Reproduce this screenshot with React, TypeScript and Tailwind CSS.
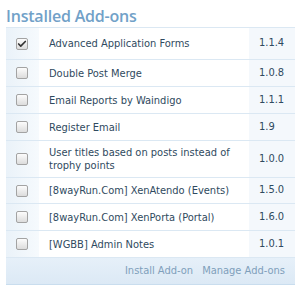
import { Check } from 'lucide-react';

const addons = [
  { title: 'Advanced Application Forms', version: '1.1.4', checked: true, h: 'h-[32px]' },
  { title: 'Double Post Merge', version: '1.0.8', h: 'h-[27px]' },
  { title: 'Email Reports by Waindigo', version: '1.1.1', h: 'h-[27px]' },
  { title: 'Register Email', version: '1.9', h: 'h-[27px]' },
  { title: 'User titles based on posts instead of trophy points', version: '1.0.0', h: 'h-[37px]' },
  { title: '[8wayRun.Com] XenAtendo (Events)', version: '1.5.0', h: 'h-[26px]' },
  { title: '[8wayRun.Com] XenPorta (Portal)', version: '1.6.0', h: 'h-[27px]' },
  { title: '[WGBB] Admin Notes', version: '1.0.1', h: 'h-[27px]' },
];

function Box({ checked }: { checked?: boolean }) {
  return (
    <span className="flex h-[12px] w-[12px] items-center justify-center rounded-[2px] border border-[#a3a3a3] bg-gradient-to-b from-[#fcfcfc] to-[#dcdcdc]">
      {checked && <Check size={10} strokeWidth={4} className="text-[#333]" />}
    </span>
  );
}

export default function App() {
  return (
    <div className="h-[292px] w-[307px] bg-white pl-[6px] pr-[12px] pt-[8px] font-['DejaVu_Sans_Condensed','DejaVu_Sans',sans-serif]">
      <h3 className="border-b border-[#dbe8f3] pb-[3px] font-['Open_Sans',sans-serif] text-[16px] font-semibold leading-[16px] tracking-[-0.2px] text-[#71a1c8]">
        Installed Add-ons
      </h3>
      <div>
        {addons.map((a) => (
          <div
            key={a.title}
            className={`grid grid-cols-[33px_1fr_46px] border-b border-[#dbe8f3] text-[11px] text-[#2f4a60] ${a.h}`}
          >
            <div className="flex items-center justify-center bg-gradient-to-r from-[#eaf2f9] to-[#f6fafd] pr-[1px]">
              <Box checked={a.checked} />
            </div>
            <div className="flex items-center pl-[10px] pr-[4px] leading-[13px]">{a.title}</div>
            <div className="flex items-center bg-[#f4f8fc] pl-[10px]">{a.version}</div>
          </div>
        ))}
      </div>
      <div className="flex h-[27px] items-center justify-end gap-[9px] border-b border-[#c9ddee] bg-gradient-to-b from-[#e6f0f9] to-[#dce9f5] pr-[10px] text-[11px] text-[#7f9fbb]">
        <span>Install Add-on</span>
        <span>Manage Add-ons</span>
      </div>
    </div>
  );
}
